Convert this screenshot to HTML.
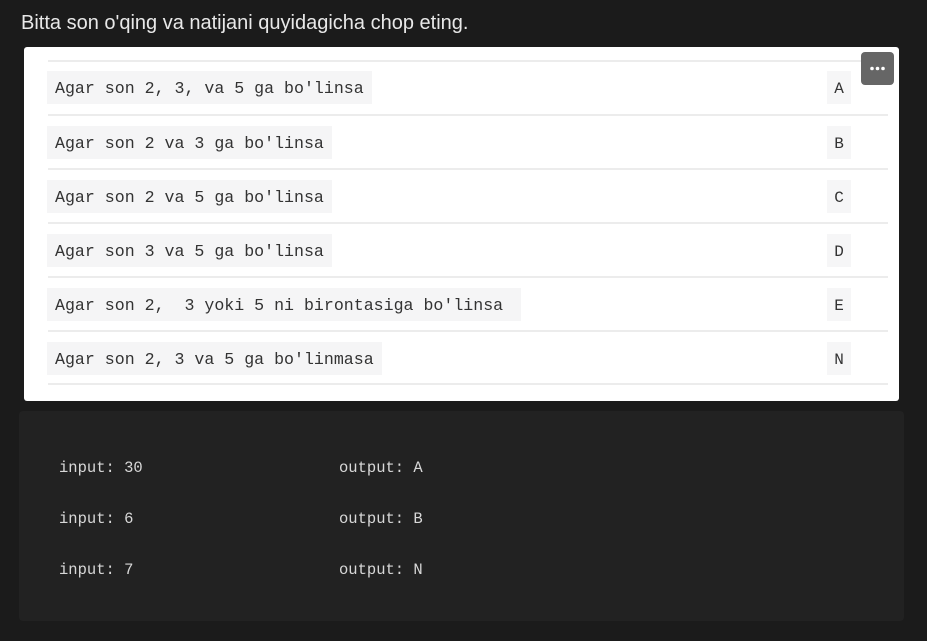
<!DOCTYPE html>
<html><head><style>
body{margin:0;width:927px;height:641px;background:#1b1b1b;position:relative;overflow:hidden;font-family:"Liberation Sans",sans-serif}
.t{position:absolute;left:21px;top:12px;color:#e8e8e8;font-size:20px}
.card{position:absolute;left:24px;top:47px;width:875px;height:354px;background:#fff;border-radius:3px}
.line{position:absolute;left:24px;width:840px;height:2px;background:#ececec}
.chip{position:absolute;left:23px;height:33px;background:#f5f5f6;font-family:"Liberation Mono",monospace;font-size:16.6px;color:#333;line-height:36px;padding:0 8px;white-space:pre}
.lt{position:absolute;left:803px;width:24px;height:33px;background:#f6f6f7;font-family:"Liberation Mono",monospace;font-size:16px;color:#333;line-height:36px;text-align:center}
.btn{position:absolute;left:861px;top:52px;width:33px;height:33px;background:#666;border-radius:4px}
.dark{position:absolute;left:19px;top:411px;width:885px;height:210px;background:#222;border-radius:4px}
.m{position:absolute;font-family:"Liberation Mono",monospace;font-size:15.5px;color:#d8d8d8;white-space:pre}
</style></head><body>
<div class="t">Bitta son o'qing va natijani quyidagicha chop eting.</div>
<div class="card">
<div class="line" style="top:13px"></div>
<div class="chip" style="top:24px">Agar son 2, 3, va 5 ga bo'linsa</div><div class="lt" style="top:24px">A</div>
<div class="line" style="top:67px"></div>
<div class="chip" style="top:79px">Agar son 2 va 3 ga bo'linsa</div><div class="lt" style="top:79px">B</div>
<div class="line" style="top:121px"></div>
<div class="chip" style="top:133px">Agar son 2 va 5 ga bo'linsa</div><div class="lt" style="top:133px">C</div>
<div class="line" style="top:175px"></div>
<div class="chip" style="top:187px">Agar son 3 va 5 ga bo'linsa</div><div class="lt" style="top:187px">D</div>
<div class="line" style="top:229px"></div>
<div class="chip" style="top:241px">Agar son 2,  3 yoki 5 ni birontasiga bo'linsa </div><div class="lt" style="top:241px">E</div>
<div class="line" style="top:283px"></div>
<div class="chip" style="top:295px">Agar son 2, 3 va 5 ga bo'linmasa</div><div class="lt" style="top:295px">N</div>
<div class="line" style="top:336px"></div>
</div>
<div class="btn"><svg width="33" height="33"><circle cx="11" cy="16.5" r="1.8" fill="#fff"/><circle cx="16.5" cy="16.5" r="1.8" fill="#fff"/><circle cx="22" cy="16.5" r="1.8" fill="#fff"/></svg></div>
<div class="dark"></div>
<div class="m" style="left:59px;top:459px">input: 30</div><div class="m" style="left:339px;top:459px">output: A</div>
<div class="m" style="left:59px;top:510px">input: 6</div><div class="m" style="left:339px;top:510px">output: B</div>
<div class="m" style="left:59px;top:561px">input: 7</div><div class="m" style="left:339px;top:561px">output: N</div>
</body></html>
